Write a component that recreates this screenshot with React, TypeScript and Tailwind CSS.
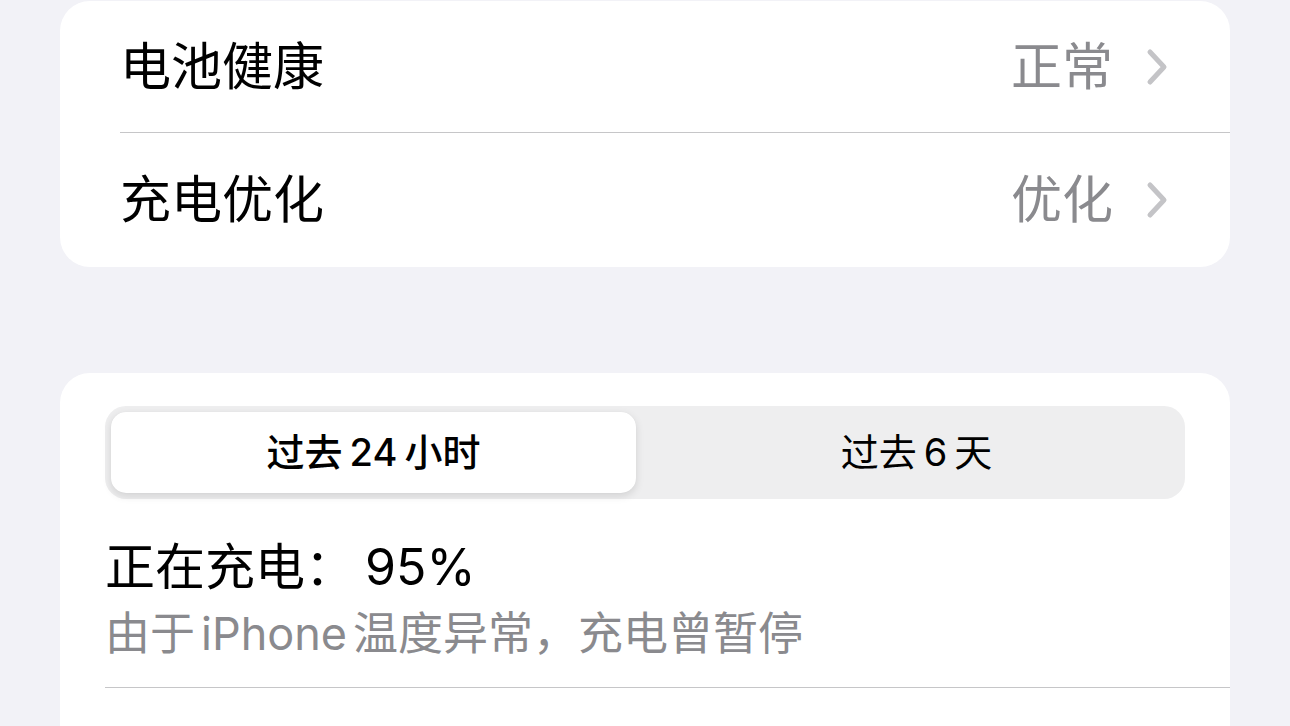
import React from "react";

const FONT = '"Inter", "Noto Sans CJK SC", sans-serif';

function Chevron() {
  return (
    <svg width="22" height="38" viewBox="0 0 22 38" fill="none" className="shrink-0">
      <path
        d="M4 4 L18 19 L4 34"
        stroke="#c4c4c7"
        strokeWidth="5"
        strokeLinecap="round"
        strokeLinejoin="round"
      />
    </svg>
  );
}

function NavRow({ label, value, height }: { label: string; value: string; height: string }) {
  return (
    <div className={`flex items-center justify-between pl-[60px] pr-[62px] ${height}`}>
      <span className="text-[51px] leading-[60px] text-black">{label}</span>
      <div className="flex items-center gap-[33px]">
        <span className="text-[51px] leading-[60px] text-[#8a8a8e]">{value}</span>
        <Chevron />
      </div>
    </div>
  );
}

export default function App() {
  return (
    <div
      className="h-[726px] w-[1290px] overflow-hidden bg-[#f2f2f7] pt-[1px]"
      style={{ fontFamily: FONT }}
    >
      {/* Battery settings group */}
      <div className="mx-[60px] overflow-hidden rounded-[30px] bg-white">
        <NavRow label="电池健康" value="正常" height="h-[131px]" />
        <div className="ml-[60px] h-px bg-[#c6c6c8]" />
        <NavRow label="充电优化" value="优化" height="h-[134px]" />
      </div>

      {/* Usage card */}
      <div className="mx-[60px] mt-[106px] h-[400px] rounded-t-[30px] bg-white pt-[33px]">
        <div className="mx-[45px] grid h-[93px] grid-cols-2 gap-[18px] rounded-[21px] bg-[#eeeeef] p-[6px]">
          <div className="flex items-center justify-center rounded-[15px] bg-white text-[38px] font-medium text-black shadow-[0_3px_8px_rgba(0,0,0,0.12),0_0_1px_rgba(0,0,0,0.06)]">
            <span>过去</span>
            <span className="mx-[7px]">24</span>
            <span>小时</span>
          </div>
          <div className="flex items-center justify-center text-[38px] text-black">
            <span>过去</span>
            <span className="mx-[7px]">6</span>
            <span>天</span>
          </div>
        </div>

        <div className="mt-[38px] pl-[45px]">
          <div className="text-[50px] leading-[60px] text-black">
            正在充电：<span className="ml-[10px]">95%</span>
          </div>
          <div className="mt-[11px] text-[45px] leading-[52px] text-[#8a8a8e]">
            由于<span className="mx-[6px]">iPhone</span>温度异常，充电曾暂停
          </div>
        </div>

        <div className="ml-[45px] mt-[27px] h-px bg-[#c6c6c8]" />
      </div>
    </div>
  );
}
